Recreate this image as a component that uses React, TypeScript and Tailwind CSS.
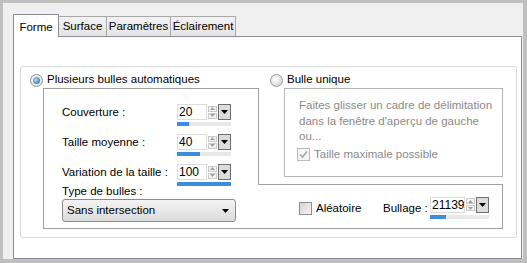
import React from "react";

const font = { fontFamily: '"Liberation Sans", Arial, sans-serif' };

function DownTri({ color = "#000" }: { color?: string }) {
    return (
        <svg width="7" height="4" viewBox="0 0 7 4">
            <path d="M0 0 H7 L3.5 4 Z" fill={color} />
        </svg>
    );
}

function Spin({ value, pct, inputW }: { value: string; pct: number; inputW: number }) {
    return (
        <div className="flex flex-col">
            <div className="flex h-[16px]">
                <div
                    className="bg-white border border-[#dcdcdc] leading-[14px] pl-[1px] text-[12px] whitespace-nowrap overflow-hidden"
                    style={{ width: inputW }}
                >
                    {value}
                </div>
                <div className="w-[11px] flex flex-col justify-center gap-[1px] px-[1px] bg-white">
                    <div className="h-[6px] border border-[#c9c9c9] bg-[#f4f4f4] flex items-center justify-center">
                        <svg width="5" height="3" viewBox="0 0 5 3"><path d="M0 3 H5 L2.5 0 Z" fill="#a0a0a0" /></svg>
                    </div>
                    <div className="h-[6px] border border-[#c9c9c9] bg-[#f4f4f4] flex items-center justify-center">
                        <svg width="5" height="3" viewBox="0 0 5 3"><path d="M0 0 H5 L2.5 3 Z" fill="#a0a0a0" /></svg>
                    </div>
                </div>
                <div className="w-[13px] border border-[#6f6f6f] bg-[#dcdcdc] flex items-center justify-center">
                    <DownTri />
                </div>
            </div>
            <div className="h-[4px] mt-[2px] bg-[#e8e8e8]">
                <div className="h-full bg-[#3b8de0]" style={{ width: `${pct}%` }} />
            </div>
        </div>
    );
}

function SpinRow({ label, value, pct }: { label: string; value: string; pct: number }) {
    return (
        <div className="flex h-[30px]">
            <div className="w-[133px] pl-[18px] leading-[16px] whitespace-nowrap">{label}</div>
            <Spin value={value} pct={pct} inputW={30} />
        </div>
    );
}

export default function App() {
    const tabs = ["Surface", "Paramètres", "Éclairement"];
    const tabW = [48, 64, 65];

    return (
        <div className="w-[527px] h-[263px] bg-[#bfbfbf] pl-[3px] pt-[3px] pr-[4px] pb-[4px] text-[11.5px] text-black" style={font}>
            <div className="h-full bg-[#f0f0f0] pl-[10px] pt-[11px] flex flex-col">
                {/* onglets */}
                <div className="flex items-end h-[22px]">
                    <div className="relative z-10 -mb-px h-[23px] w-[46px] bg-white border-l border-t border-r border-[#898c95] flex items-start justify-center pt-[4px]">
                        Forme
                    </div>
                    {tabs.map((t, i) => (
                        <div
                            key={t}
                            className="h-[20px] border-t border-r border-[#a9a9a9] bg-linear-to-b from-[#f2f2f2] to-[#e4e4e4] flex items-center justify-center"
                            style={{ width: tabW[i] }}
                        >
                            {t}
                        </div>
                    ))}
                </div>

                {/* panneau */}
                <div className="w-[509px] h-[223px] bg-white border border-[#898c95]">
                    <div className="ml-[6px] mt-[29px] w-[497px] h-[172px] border border-[#d9d9d9] rounded-[3px]">
                        {/* boutons radio */}
                        <div className="flex h-[14px] mt-[6px]">
                            <div className="w-[237px] pl-[9px] flex items-center gap-[4px]">
                                <div className="w-[13px] h-[13px] rounded-full border border-[#8f8f8f] bg-[radial-gradient(circle_at_40%_40%,#ffffff,#d8d8d8)] flex items-center justify-center">
                                    <div className="w-[7px] h-[7px] rounded-full bg-[radial-gradient(circle_at_40%_40%,#a9dcf8,#1e5d96)]" />
                                </div>
                                <span>Plusieurs bulles automatiques</span>
                            </div>
                            <div className="pl-[12px] flex items-center gap-[4px]">
                                <div className="w-[13px] h-[13px] rounded-full border border-[#9a9a9a] bg-[radial-gradient(circle_at_40%_40%,#ffffff,#c9c9c9)]" />
                                <span>Bulle unique</span>
                            </div>
                        </div>

                        {/* cadres */}
                        <div className="flex ml-[22px] mt-px h-[141px]">
                            <div className="w-[215px] border-l border-t border-b border-[#a0a0a0] pt-[15px]">
                                <SpinRow label="Couverture :" value="20" pct={22} />
                                <SpinRow label="Taille moyenne :" value="40" pct={42} />
                                <SpinRow label="Variation de la taille :" value="100" pct={100} />
                                <div className="pl-[18px] leading-[16px] -mt-[11px]">Type de bulles :</div>
                                <div className="ml-[18px] w-[174px] h-[23px] rounded-[3px] border border-[#8b8b8b] bg-linear-to-b from-[#f4f4f4] to-[#dcdcdc] flex items-center justify-between pl-[4px] pr-[6px]">
                                    <span>Sans intersection</span>
                                    <DownTri />
                                </div>
                            </div>
                            <div className="w-[245px] flex flex-col">
                                <div className="h-[96px] border-l border-[#a0a0a0] pl-[25px]">
                                    <div className="h-[89px] border border-[#b4b4b4] pl-[14px] pt-[9px] text-[#8a8a8a] leading-[15.5px]">
                                        <div>Faites glisser un cadre de délimitation</div>
                                        <div>dans la fenêtre d'aperçu de gauche</div>
                                        <div>ou...</div>
                                        <div className="flex items-center gap-[4px] mt-[2px] -ml-[2px]">
                                            <div className="w-[13px] h-[13px] border border-[#b9b9b9] bg-[#f6f6f6] flex items-center justify-center">
                                                <svg width="9" height="9" viewBox="0 0 9 9">
                                                    <path d="M1 4.5 L3.5 7 L8 1.5" stroke="#a6a6a6" strokeWidth="1.6" fill="none" />
                                                </svg>
                                            </div>
                                            <span>Taille maximale possible</span>
                                        </div>
                                    </div>
                                </div>
                                <div className="h-[45px] border-t border-r border-b border-[#a0a0a0] flex items-center pl-[41px] pt-[4px]">
                                    <div className="w-[13px] h-[13px] border border-[#8f8f8f] bg-linear-to-br from-[#d4d4d4] to-[#f6f6f6]" />
                                    <span className="ml-[4px] w-[67px]">Aléatoire</span>
                                    <span className="w-[47px] whitespace-nowrap">Bullage :</span>
                                    <div className="-mt-[2px]">
                                        <Spin value="21139" pct={27} inputW={35} />
                                    </div>
                                </div>
                            </div>
                        </div>
                    </div>
                </div>
            </div>
        </div>
    );
}
